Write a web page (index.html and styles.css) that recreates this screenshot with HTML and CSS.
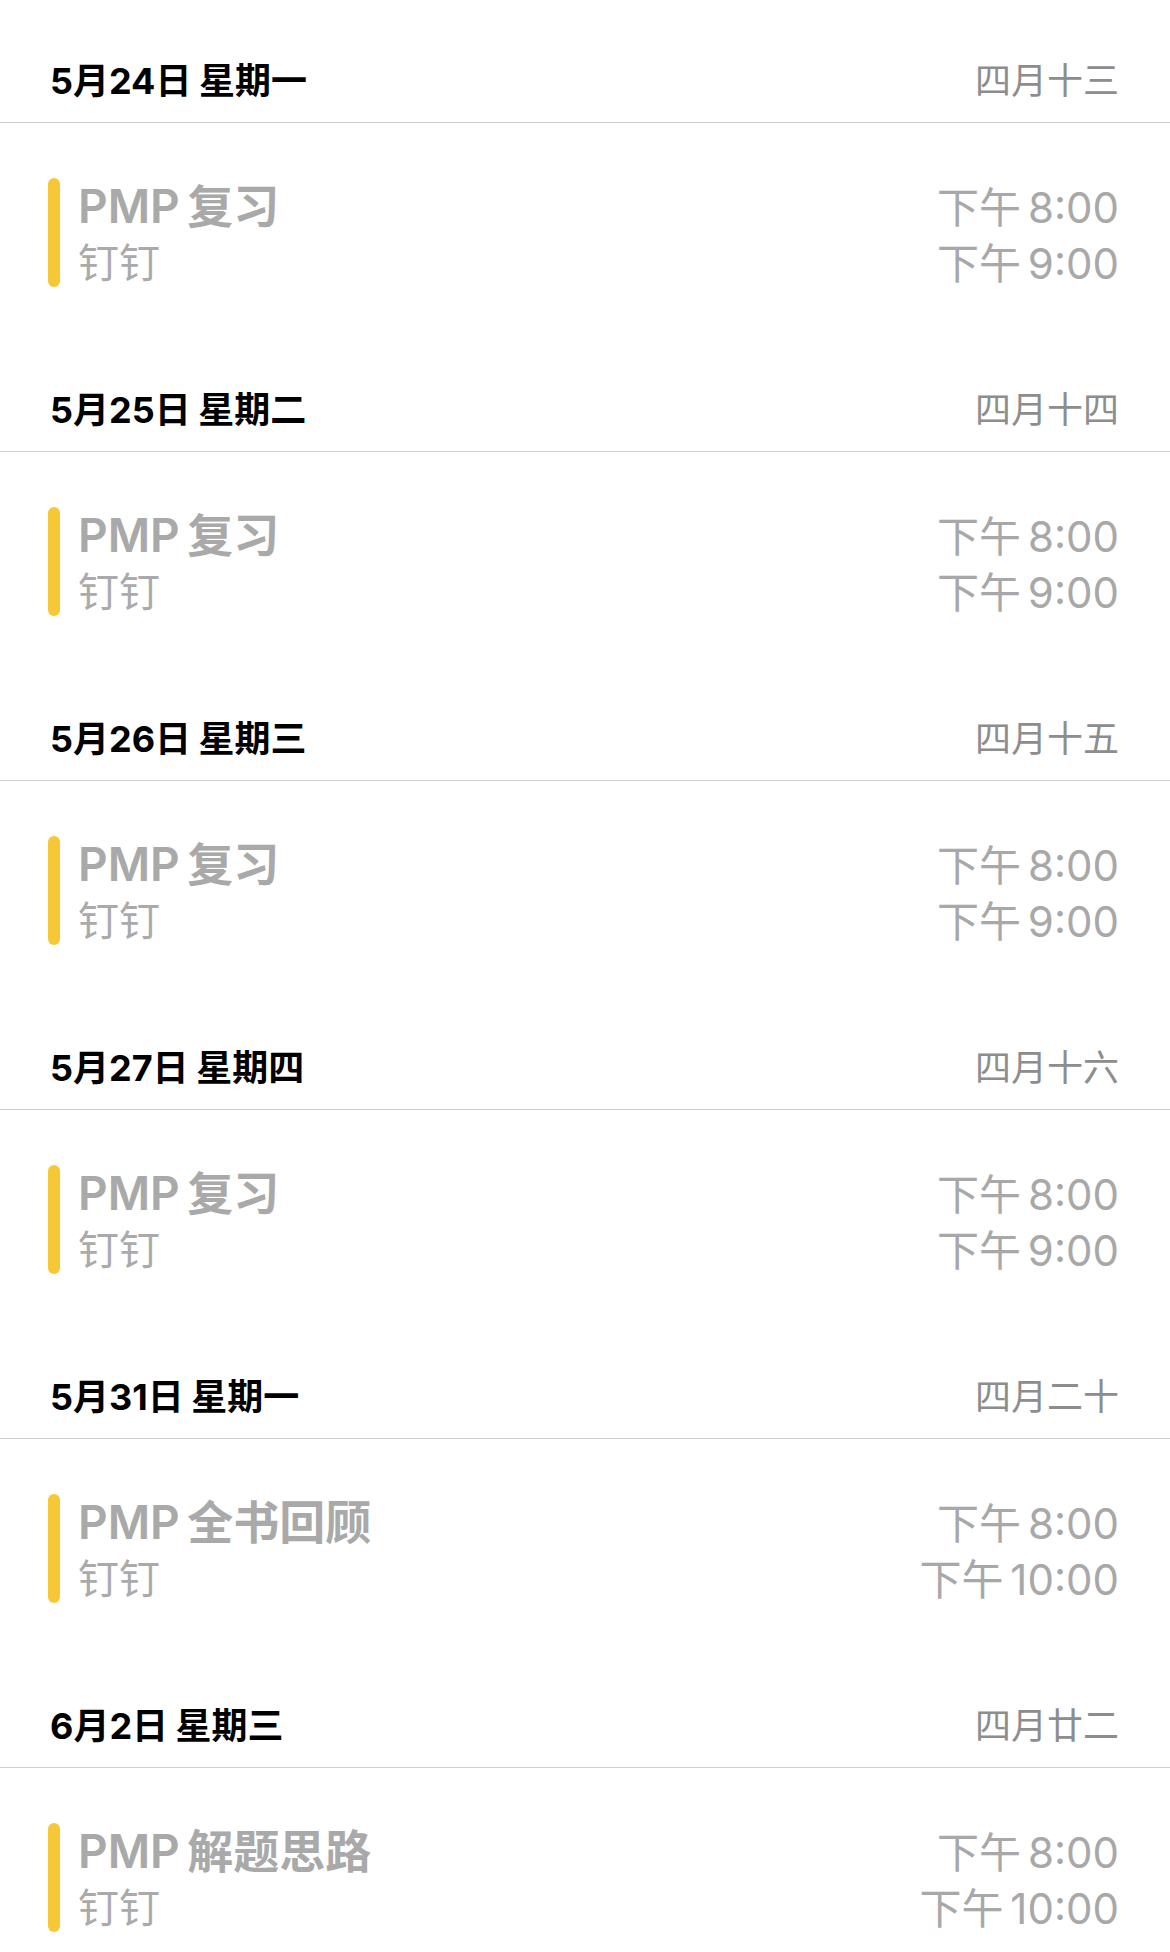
FILE: index.html
```html
<!DOCTYPE html>
<html lang="zh-CN">
<head>
<meta charset="utf-8">
<title>日程</title>
<link rel="stylesheet" href="styles.css">
</head>
<body>
<main class="agenda">
  <section class="day">
    <header class="day-head"><span class="date">5月24日 星期一</span><span class="lunar">四月十三</span></header>
    <div class="event">
      <div class="bar"></div>
      <div class="info"><div class="title">PMP 复习</div><div class="loc">钉钉</div></div>
      <div class="times"><div class="t1">下午 8:00</div><div class="t2">下午 9:00</div></div>
    </div>
  </section>
  <section class="day">
    <header class="day-head"><span class="date">5月25日 星期二</span><span class="lunar">四月十四</span></header>
    <div class="event">
      <div class="bar"></div>
      <div class="info"><div class="title">PMP 复习</div><div class="loc">钉钉</div></div>
      <div class="times"><div class="t1">下午 8:00</div><div class="t2">下午 9:00</div></div>
    </div>
  </section>
  <section class="day">
    <header class="day-head"><span class="date">5月26日 星期三</span><span class="lunar">四月十五</span></header>
    <div class="event">
      <div class="bar"></div>
      <div class="info"><div class="title">PMP 复习</div><div class="loc">钉钉</div></div>
      <div class="times"><div class="t1">下午 8:00</div><div class="t2">下午 9:00</div></div>
    </div>
  </section>
  <section class="day">
    <header class="day-head"><span class="date">5月27日 星期四</span><span class="lunar">四月十六</span></header>
    <div class="event">
      <div class="bar"></div>
      <div class="info"><div class="title">PMP 复习</div><div class="loc">钉钉</div></div>
      <div class="times"><div class="t1">下午 8:00</div><div class="t2">下午 9:00</div></div>
    </div>
  </section>
  <section class="day">
    <header class="day-head"><span class="date">5月31日 星期一</span><span class="lunar">四月二十</span></header>
    <div class="event">
      <div class="bar"></div>
      <div class="info"><div class="title">PMP 全书回顾</div><div class="loc">钉钉</div></div>
      <div class="times"><div class="t1">下午 8:00</div><div class="t2">下午 10:00</div></div>
    </div>
  </section>
  <section class="day">
    <header class="day-head"><span class="date">6月2日 星期三</span><span class="lunar">四月廿二</span></header>
    <div class="event">
      <div class="bar"></div>
      <div class="info"><div class="title">PMP 解题思路</div><div class="loc">钉钉</div></div>
      <div class="times"><div class="t1">下午 8:00</div><div class="t2">下午 10:00</div></div>
    </div>
  </section>
</main>
</body>
</html>
```

FILE: styles.css
```css
* { box-sizing: border-box; }

html, body {
  margin: 0;
  padding: 0;
  background: #ffffff;
}

body {
  font-family: Inter, "Noto Sans CJK SC", sans-serif;
  color: #000;
}

.agenda {
  padding-top: 41px;
}

.day-head {
  display: flex;
  justify-content: space-between;
  align-items: center;
  height: 82px;
  padding: 0 51px 1px 50px;
  border-bottom: 1px solid #cfcfcf;
}

.date {
  font-size: 36px;
  font-weight: 700;
  color: #000;
  line-height: 42px;
  word-spacing: -1px;
}

.lunar {
  font-size: 36px;
  font-weight: 400;
  color: #8d8d8d;
  line-height: 42px;
}

.event {
  display: flex;
  align-items: flex-start;
  height: 247px;
  padding: 55px 51px 0 48px;
}

.bar {
  width: 12px;
  height: 109px;
  border-radius: 6px;
  background: #f6c836;
  flex: none;
}

.info {
  margin-left: 18px;
}

.title {
  font-size: 46px;
  line-height: 56px;
  font-weight: 600;
  color: #a9a9a9;
  word-spacing: -4px;
  white-space: nowrap;
}

.loc {
  font-size: 41px;
  line-height: 58px;
  color: #aaaaaa;
}

.times {
  margin-left: auto;
  padding-top: 2px;
  text-align: right;
  font-size: 42px;
  color: #a8a8a8;
  word-spacing: -5px;
  white-space: nowrap;
}

.t1 { line-height: 56px; }
.t2 { line-height: 56px; }
```
